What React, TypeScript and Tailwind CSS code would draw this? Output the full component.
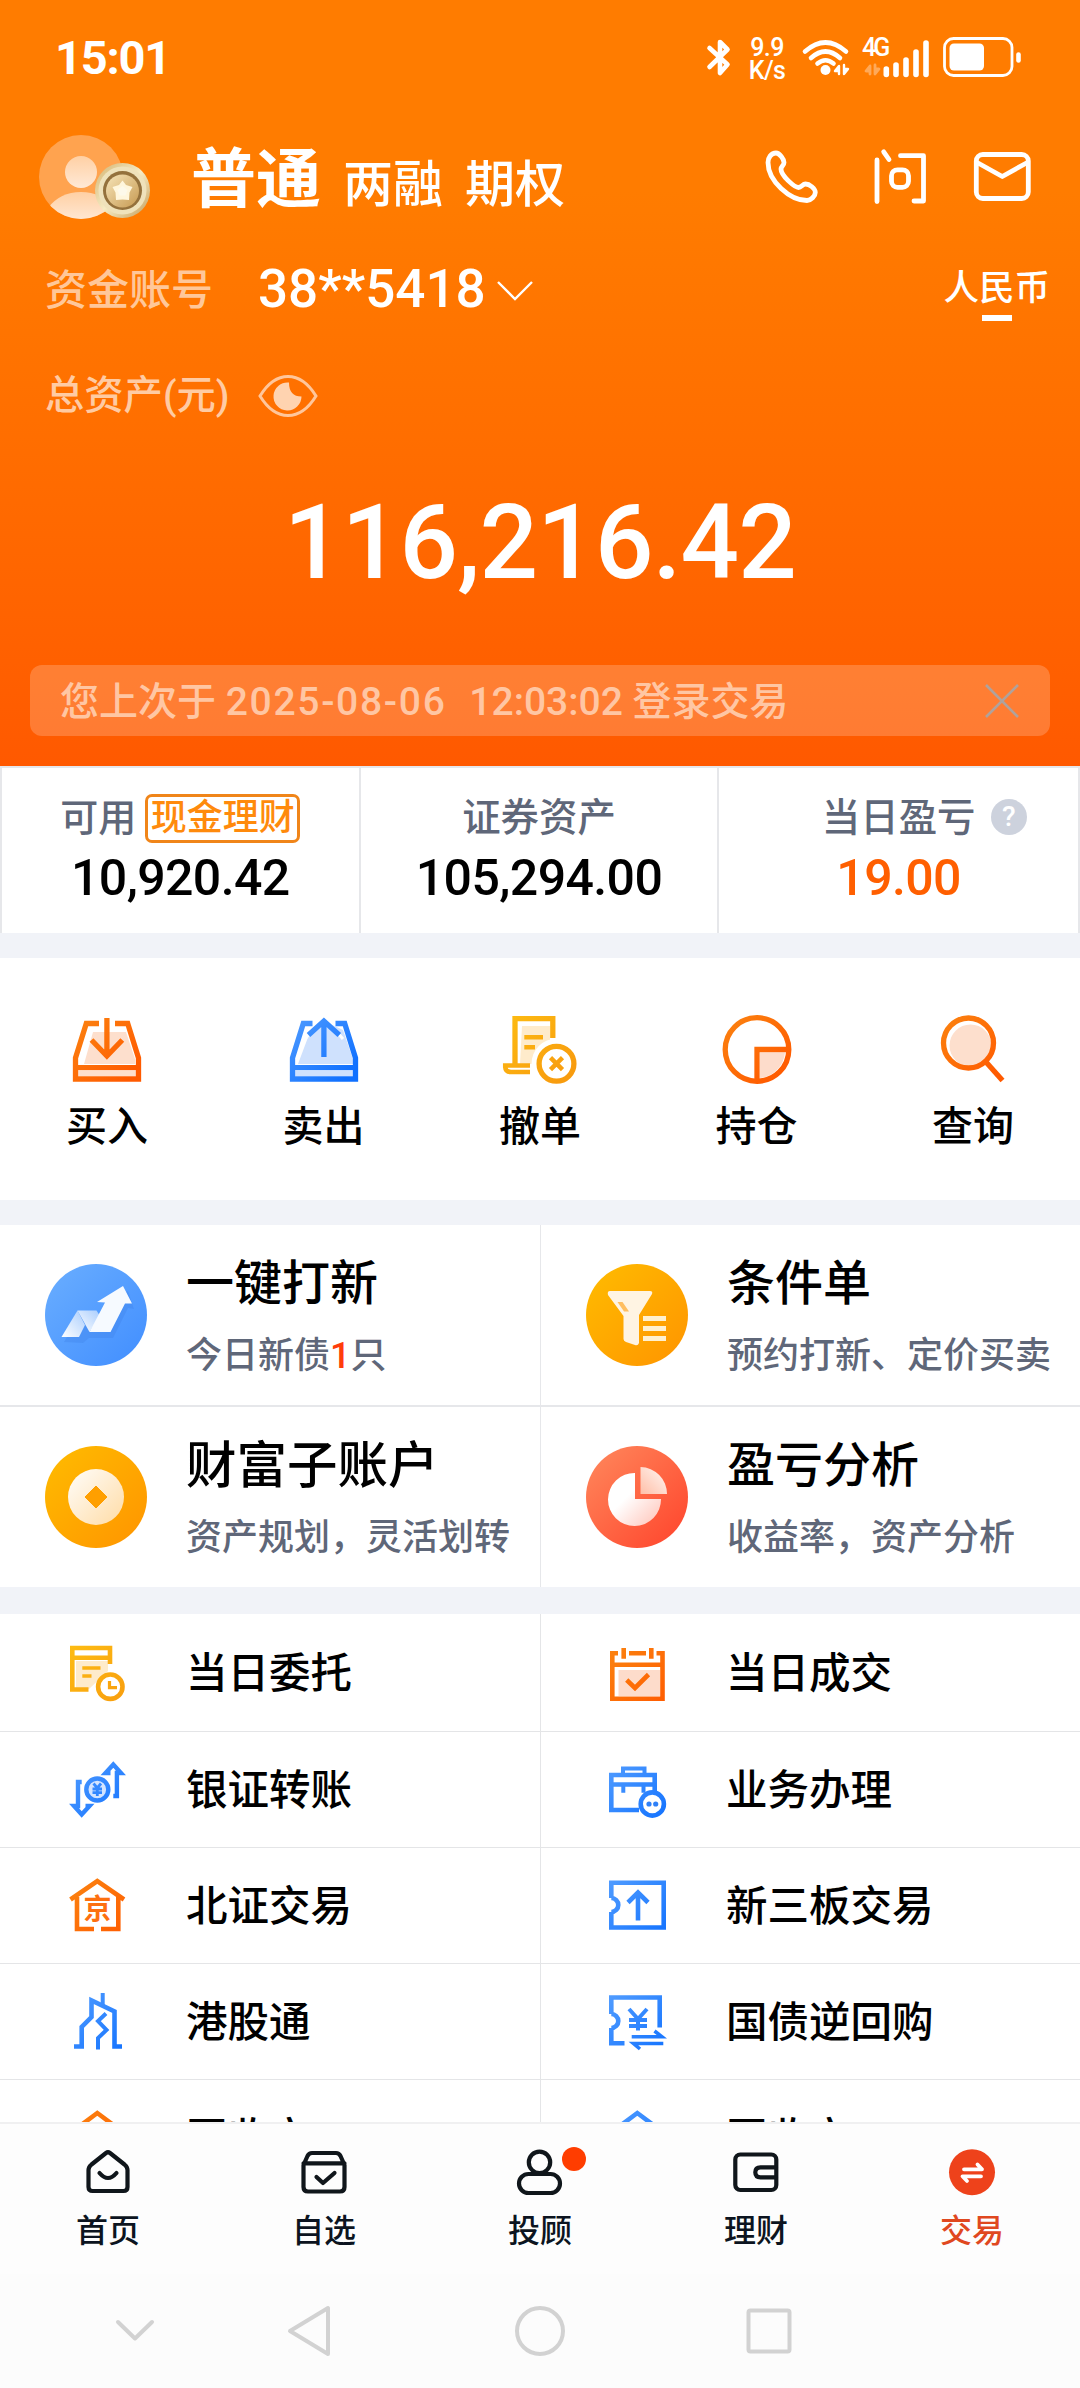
import { ReactNode } from "react";

const ORANGE = "url(#orange)"
const BLUE = "url(#blue)"
const YELLOW = "url(#yellow)"

// gradients shared by all the line icons
function IconGradients(){
    return(
        <svg className="absolute w-0 h-0" aria-hidden="true">
            <defs>
                <linearGradient id="orange" gradientUnits="userSpaceOnUse" x1="4" y1="4" x2="62" y2="62">
                    <stop offset="0" stopColor="#fb8310"/><stop offset="1" stopColor="#ff5a00"/>
                </linearGradient>
                <linearGradient id="blue" gradientUnits="userSpaceOnUse" x1="4" y1="4" x2="62" y2="62">
                    <stop offset="0" stopColor="#4f9bff"/><stop offset="1" stopColor="#0f70ff"/>
                </linearGradient>
                <linearGradient id="yellow" gradientUnits="userSpaceOnUse" x1="4" y1="4" x2="62" y2="62">
                    <stop offset="0" stopColor="#fdbb12"/><stop offset="1" stopColor="#f89c0e"/>
                </linearGradient>
                <linearGradient id="discBlue" x1="0" y1="0" x2="1" y2="1">
                    <stop offset="0.1" stopColor="#66abff"/><stop offset="0.9" stopColor="#4591ff"/>
                </linearGradient>
                <linearGradient id="discYellow" x1="0" y1="0" x2="1" y2="1">
                    <stop offset="0.1" stopColor="#ffb800"/><stop offset="0.9" stopColor="#ff9800"/>
                </linearGradient>
                <linearGradient id="discRed" x1="0" y1="0" x2="1" y2="1">
                    <stop offset="0.1" stopColor="#ff8258"/><stop offset="0.9" stopColor="#ff4a30"/>
                </linearGradient>
                <linearGradient id="cream" x1="0" y1="0" x2="1" y2="1">
                    <stop offset="0.1" stopColor="#fffaf2"/><stop offset="0.9" stopColor="#ffdfae"/>
                </linearGradient>
                <linearGradient id="pink" x1="0" y1="0" x2="1" y2="1">
                    <stop offset="0.4" stopColor="#ffffff"/><stop offset="1" stopColor="#ffc2b6"/>
                </linearGradient>
                <linearGradient id="pinkSmall" x1="1" y1="0" x2="0" y2="1">
                    <stop offset="0.1" stopColor="#fff3ee"/><stop offset="1" stopColor="#ffbfa8"/>
                </linearGradient>
                <linearGradient id="ribbon" x1="0" y1="1" x2="1" y2="0">
                    <stop offset="0" stopColor="#ffffff"/><stop offset="1" stopColor="#a9cdfd"/>
                </linearGradient>
                <linearGradient id="person" x1="0" y1="0" x2="0" y2="1">
                    <stop offset="0" stopColor="#ffd0a4"/><stop offset="1" stopColor="#ffe9d6"/>
                </linearGradient>
                <linearGradient id="medal" x1="0" y1="0" x2="1" y2="1">
                    <stop offset="0" stopColor="#d3b26e"/><stop offset="0.5" stopColor="#f6ebc4"/><stop offset="1" stopColor="#c39c58"/>
                </linearGradient>
                <linearGradient id="medalCore" x1="0" y1="0" x2="1" y2="1">
                    <stop offset="0" stopColor="#f6e4b8"/><stop offset="1" stopColor="#c79a52"/>
                </linearGradient>
            </defs>
        </svg>
    );
}

function StatusIcons(){
    return(
        <svg width="330" height="60" viewBox="700 28 330 60" fill="none" stroke="#fff" strokeLinecap="round" strokeLinejoin="round">
            <path d="M709.5 48 L727.5 64.5 L720 73 V42 L727.5 49.5 L709.5 67" strokeWidth="4.6"/>
            <g strokeWidth="4.6">
                <path d="M805 51.5 Q825.5 33.5 846 51.5"/>
                <path d="M811 58 Q825.5 45 840 58"/>
                <path d="M817.5 63.5 Q825.5 57 833.5 63.5"/>
            </g>
            <circle cx="825.5" cy="70" r="5" fill="#fff" stroke="none"/>
            <path d="M839 74 V66 L835 71 H839 M844 65 V74 L848 69 H844" strokeWidth="2.4"/>
            <path d="M870 74 V66 L866 71 H870 M875 65 V74 L879 69 H875" strokeWidth="2.8" opacity="0.35"/>
            <g strokeWidth="5.6">
                <path d="M886.3 69 V74.5"/>
                <path d="M896 65 V74.5"/>
                <path d="M906 60 V74.5"/>
                <path d="M916 52 V74.5"/>
                <path d="M926 43 V74.5"/>
            </g>
            <rect x="944.5" y="38.5" width="67.5" height="37" rx="9" strokeWidth="2.8"/>
            <rect x="949.5" y="43.5" width="34.5" height="27" rx="4.5" fill="#fff" stroke="none"/>
            <path d="M1018.5 54.5 V60.5" strokeWidth="4.6"/>
        </svg>
    );
}

function Avatar(){
    return(
        <svg width="116" height="88" viewBox="37 133 116 88">
            <clipPath id="face"><circle cx="81" cy="177" r="42"/></clipPath>
            <circle cx="81" cy="177" r="42" fill="#ffa34f"/>
            <g clipPath="url(#face)" fill="url(#person)">
                <circle cx="81" cy="172" r="16"/>
                <path d="M48 208 Q60 192 81 192 Q102 192 114 208 V222 H48 Z"/>
            </g>
            <circle cx="122.5" cy="190.5" r="27.5" fill="url(#medal)"/>
            <circle cx="122.5" cy="190.5" r="24" fill="#efe2bb"/>
            <circle cx="122.5" cy="190.5" r="19.5" fill="#94713c"/>
            <circle cx="122.5" cy="191" r="16.5" fill="url(#medalCore)"/>
            <path d="M122.5 180.5 L126 185 L132.5 187 L129.5 192.5 L129 200 L122.5 199.5 L116 200 L115.5 192.5 L112.5 187 L119 185 Z" fill="#fff6dc"/>
            <path d="M122.5 186 L127.5 190 L125.5 195.5 H119.5 L117.5 190 Z" fill="#fdf9ea"/>
        </svg>
    );
}

function HeaderActions(){
    return(
        <svg width="272" height="60" viewBox="762 147 272 60" fill="none" stroke="#fff" strokeWidth="4.8" strokeLinecap="round" strokeLinejoin="round">
            <path d="M776 153 C771 153 768 158 768 162.5 C768 181 790 200.5 807 200.5 C811 200.5 815.3 196 815.3 192.5 C815.3 188.5 809.5 184 805.5 184 C802.500 184 801.500 187.500 798.500 187.500 C795 187.500 781 176 781 169 C781 166.500 784 165.500 784 162.500 C784 159 779.500 153 776 153 Z"/>
            <path d="M877 160 V201.500 M883.700 151.800 L889 159.500"/>
            <path d="M900.500 155.700 H923.500 V201 H914"/>
            <rect x="891.500" y="169.800" width="17" height="17.500" rx="6"/>
            <rect x="976.300" y="154.500" width="52" height="44" rx="6.500"/>
            <path d="M978 163 L1002.300 176.500 L1026.500 163"/>
        </svg>
    );
}

const quickActions: { label: string, icon: ReactNode }[] = [
    { label: "买入", icon: <g>
        <path d="M24 18 H57 L66 45 V50 H15 Z" fill="#fddfcd"/>
        <path d="M9 57 H67 V62 H9 Z" fill="#fddfcd"/>
        <g stroke={ORANGE}>
            <path d="M30 9.5 H17.3 L6.5 44 V65 H69.5 V44 L58.7 9.5 H46 M6.5 53.7 H69.5"/>
            <path d="M37.9 4 V43 M22.5 26 L37.9 42 L53.3 26"/>
        </g>
    </g> },
    { label: "卖出", icon: <g>
        <path d="M24 18 L38 7 L57 16 L67 45 V50 H12 Z" fill="#cfe1fd"/>
        <path d="M9 57 H67 V62 H9 Z" fill="#cfe1fd"/>
        <path d="M19 25 L37.9 3 L57 25" stroke="#fff" strokeWidth="3"/>
        <g stroke={BLUE}>
            <path d="M26.5 9.5 H17.3 L6.5 44 V65 H69.5 V44 L58.7 9.5 H49.5 M6.5 53.7 H69.5"/>
            <path d="M37.9 43 V8 M22.5 21 L37.9 7 L53.3 21"/>
        </g>
    </g> },
    { label: "撤单", icon: <g>
        <path d="M20 12 H48 V34 L34 50 H18 Z" fill="#feebcb"/>
        <g stroke={YELLOW}>
            <path d="M13 51 V4.7 H50.8 V24"/>
            <path d="M3.2 49.3 V53 Q3.5 58 9 58 H28 M3.2 51.500 H28" strokeWidth="4.5"/>
            <path d="M22.3 23.3 H41 M22.3 33.3 H33" strokeWidth="4.5"/>
        </g>
        <circle cx="54.5" cy="49.7" r="25" fill="#fff"/>
        <g stroke={YELLOW}>
            <circle cx="54.5" cy="49.7" r="17.4"/>
            <path d="M48.5 43.7 L60.5 55.7 M60.5 43.7 L48.5 55.7" strokeWidth="4.5"/>
        </g>
    </g> },
    { label: "持仓", icon: <g>
        <path d="M41 38.5 H66 A28 28 0 0 1 41 64 Z" fill="#fddccb"/>
        <g stroke={ORANGE}>
            <circle cx="38" cy="35.5" r="31.8"/>
            <path d="M38 67 V35.5 H70"/>
        </g>
    </g> },
    { label: "查询", icon: <g>
        <circle cx="35.5" cy="31.5" r="21" fill="#fddfcd"/>
        <g stroke={ORANGE}>
            <circle cx="33.5" cy="29" r="25"/>
            <path d="M51 48 L67.5 66.5"/>
        </g>
    </g> },
]

const features: { title: string, titleClass: string, sub: ReactNode, icon: ReactNode }[] = [
    { title: "一键打新", titleClass: "text-[48px]", sub: <>今日新债<span className="text-[#ff3d0a]">1</span>只</>, icon: <g>
        <circle cx="51" cy="51" r="51" fill="url(#discBlue)"/>
        <path d="M18 75 L34 48 H52 L57 52 L54 63 L64 42 L56 40 L82 24 L88 42 L82 41 L67 71 H43 L37 76 Z" fill="#3a7fe6" opacity="0.3" transform="translate(1 3)"/>
        <path d="M16.5 73 L32.5 46.5 L40 61 L34 73 Z" fill="url(#ribbon)"/>
        <path d="M32.5 46.5 H51.5 L55 52 L44.5 68 Z" fill="url(#ribbon)"/>
        <path d="M44.5 68 L60 38.5 L52 38 L78 22 L87 39.5 H80 L65.5 68 Z" fill="#f6faff"/>
    </g> },
    { title: "条件单", titleClass: "text-[48px]", sub: "预约打新、定价买卖", icon: <g>
        <circle cx="51" cy="51" r="51" fill="url(#discYellow)"/>
        <path d="M24 27 H64 Q67 27 66 30 L53 51 V79 Q52 82 49 81 L40 78 Q37.5 77 37.5 75 V52 L22 31 Q21 27 24 27 Z" fill="#fff4e3"/>
        <path d="M31.5 38 H36.5 L43 47.5 H38 Z" fill="#ffbe60"/>
        <path d="M57 52 H80 V57 H57 Z M57 62 H80 V67 H57 Z M57 72 H80 V77 H57 Z" fill="#fff0cf"/>
    </g> },
    { title: "财富子账户", titleClass: "text-[50.5px]", sub: "资产规划，灵活划转", icon: <g>
        <circle cx="51" cy="51" r="51" fill="url(#discYellow)"/>
        <circle cx="51" cy="51" r="28" fill="url(#cream)"/>
        <path d="M51 40 L62 51 L51 62 L40 51 Z" fill="#ff9f00" stroke="#ff9f00" strokeWidth="1" strokeLinejoin="round"/>
    </g> },
    { title: "盈亏分析", titleClass: "text-[48px]", sub: "收益率，资产分析", icon: <g>
        <circle cx="51" cy="51" r="51" fill="url(#discRed)"/>
        <path d="M49 27 V53 H75 A26.5 26.5 0 1 1 49 27 Z" fill="url(#pink)"/>
        <path d="M54.5 21 A27 27 0 0 1 81 48 H54.5 Z" fill="url(#pinkSmall)"/>
    </g> },
]

const menu: { label: string, icon: ReactNode }[] = [
    { label: "当日委托", icon: <g>
        <path d="M9 18 H41 V28 L22 46 H9 Z" fill="#feebcb"/>
        <g stroke={YELLOW}>
            <path d="M21.5 46.5 H5.3 V5 H43 V21 M5.3 14.7 H43"/>
            <path d="M15.3 25 H33.5 M15.3 33 H24.5" strokeWidth="3.6"/>
            <circle cx="43.3" cy="43.7" r="12.2"/>
            <path d="M42.5 38 V44.7 H50" strokeWidth="3.2"/>
        </g>
    </g> },
    { label: "当日成交", icon: <g>
        <path d="M11.5 27 H53 V53 H11.5 Z" fill="#fddccb"/>
        <g stroke={ORANGE}>
            <path d="M11 10.3 H5.3 V55.7 H55.5 V10.3 H49.5 M5.3 21.7 H55.5 M22 10.3 H39"/>
            <path d="M16.7 5 V15.7 M44.3 5 V15.7 M19.7 37 L28 45 L41.5 31.5"/>
        </g>
    </g> },
    { label: "银证转账", icon: <g>
        <circle cx="30.3" cy="29.5" r="10.5" fill="#d3e4ff"/>
        <g stroke={BLUE} strokeWidth="4.4">
            <circle cx="30.3" cy="29.5" r="11"/>
            <path d="M46.3 36 H49.9 V13 H54 L46.3 4.5 L38.5 13 H43.5"/>
            <path d="M14.7 22 H11 V46 H7 L14.7 54.5 L22.5 46 H18.5"/>
            <path d="M26.5 23.5 L30.3 28 L34 23.5 M30.3 28 V36 M25.5 29 H35 M25.5 32.7 H35" strokeWidth="2.8"/>
        </g>
    </g> },
    { label: "业务办理", icon: <g>
        <g stroke={BLUE}>
            <path d="M32 50 H4.3 V15 H47.7 V32 M4.3 24.5 H47.7"/>
            <path d="M16 15 V8.5 H37.5 V15 M16.3 24 V32.7 M36.5 24 V32.7" strokeWidth="4"/>
            <circle cx="45.3" cy="44" r="11.6" fill="#fff"/>
        </g>
        <circle cx="42" cy="44" r="2.6" fill="#2f80f8"/>
        <circle cx="48.7" cy="44" r="2.6" fill="#2f80f8"/>
    </g> },
    { label: "北证交易", icon: <g>
        <g stroke={ORANGE}>
            <path d="M3.5 23.5 L30.3 5 L57 23.5 M10 21 V53 H27 M34 53 H51.3 V21"/>
        </g>
        <text x="30.5" y="43" textAnchor="middle" fontSize="28" fontWeight="700" fill="#fd7010">京</text>
    </g> },
    { label: "新三板交易", icon: <g stroke={BLUE}>
        <path d="M4.3 22 V6.7 H56.7 V51.5 H4.3 V36"/>
        <path d="M4.3 22 A7 7 0 0 1 4.3 36"/>
        <path d="M31 44.5 V17 M21 26.5 L31 16.5 L41 26.5"/>
    </g> },
    { label: "港股通", icon: <g stroke={BLUE}>
        <path d="M7 54.5 H14.7 V35 L24.5 25 V8.5 L47.5 19.5 V54.5 H55"/>
        <path d="M35.7 1 V13 M39 21.5 L31 29 L39.5 38 L31 46 V57.5" strokeWidth="4"/>
    </g> },
    { label: "国债逆回购", icon: <g stroke={BLUE}>
        <path d="M17.5 51.3 H4.3 V36 M4.3 22 V5.5 H52.7 V35.5"/>
        <path d="M4.3 22 A7 7 0 0 1 4.3 36"/>
        <path d="M22 17 L31 27 L40 17 M31 27 V38.5 M22 28 H40 M22 34 H40" strokeWidth="4"/>
        <path d="M24.7 44.8 H55 L47.5 39 M56.3 51.5 H26.5 L33 57" strokeWidth="3.6"/>
    </g> },
    { label: "固收宝", icon: <g stroke={ORANGE}>
        <path d="M3.5 25 L30.3 5 L57 25 M10 21 V53 H51.3 V21"/>
    </g> },
    { label: "固收宝", icon: <g stroke={BLUE}>
        <path d="M3.5 25 L30.3 5 L57 25 M10 21 V53 H51.3 V21"/>
    </g> },
]

const tabs: { label: string, active?: boolean, dot?: boolean, icon: ReactNode }[] = [
    { label: "首页", icon: <g>
        <path d="M22 5 Q24 3.5 26 5 L40.5 16.5 Q43.5 19 43.5 22 V39 Q43.5 43 39.5 43 H8.5 Q4.5 43 4.5 39 V22 Q4.5 19 7.5 16.5 Z"/>
        <path d="M15.5 25 Q24 35 32.5 25"/>
    </g> },
    { label: "自选", icon: <g>
        <path d="M3.5 17 V39 Q3.5 43.5 8 43.5 H40 Q44.5 43.5 44.5 39 V17 L40.5 8 Q39 5 36 5 H12 Q9 5 7.5 8 Z M3.5 15.3 H44.5"/>
        <path d="M16.5 29 L23 35 L34.5 25"/>
    </g> },
    { label: "投顾", dot: true, icon: <g>
        <circle cx="23.5" cy="14.3" r="10.7"/>
        <rect x="3" y="26" width="41" height="19" rx="9.5"/>
    </g> },
    { label: "理财", icon: <g>
        <rect x="3.3" y="6.5" width="41" height="35.5" rx="5"/>
        <path d="M44 19.3 H28.5 Q23.3 19.3 23.3 24.3 Q23.3 29.3 28.5 29.3 H44"/>
    </g> },
    { label: "交易", active: true, icon: <g>
        <circle cx="24" cy="24.3" r="23" fill="#ee421b" stroke="none"/>
        <path d="M16 21.3 H34 L29.5 16.5 M33 28.3 H14.5 L19 33" stroke="#fff" strokeWidth="3.8"/>
    </g> },
]

export default function App(){
    return(
        <div className="w-[1080px] h-[2388px] flex flex-col overflow-hidden bg-white font-medium text-black font-['Roboto','Noto_Sans_CJK_SC',sans-serif]">
            <IconGradients/>

            <header className="h-[766px] shrink-0 flex flex-col bg-linear-to-b from-[#ff7c00] from-25% to-[#ff5900] text-white">
                <div className="h-[115px] flex items-center justify-between pl-[55px] pr-[50px]">
                    <span className="text-[47px] font-bold leading-none tracking-[-1.2px]">15:01</span>
                    <div className="relative">
                        <StatusIcons/>
                        <div className="absolute left-[46px] top-[8px] w-[42px] flex flex-col items-center text-[25px] leading-[23px] tracking-tight">
                            <span>9.9</span>
                            <span>K/s</span>
                        </div>
                        <div className="absolute left-[162px] top-[8px] text-[25px] leading-[23px] tracking-[-3px]">4G</div>
                    </div>
                </div>

                <div className="h-[124px] flex items-center pl-[37px] pr-[46px]">
                    <Avatar/>
                    <div className="flex items-baseline ml-[38px] pt-[7px] leading-none">
                        <span className="text-[65px] font-bold">普通</span>
                        <span className="text-[50px] ml-[22px]">两融</span>
                        <span className="text-[50px] ml-[22px]">期权</span>
                    </div>
                    <div className="ml-auto"><HeaderActions/></div>
                </div>

                <div className="h-[100px] flex items-center pl-[45px] pr-[30px]">
                    <span className="w-[213px] pt-[4px] text-[42px] leading-none text-[#ffc799]">资金账号</span>
                    <span className="text-[53px] leading-none">38**5418</span>
                    <svg className="ml-[10px] mt-[3px]" width="38" height="24" viewBox="0 0 38 24" fill="none" stroke="#fff" strokeWidth="2.4"><path d="M2 3 L19 20 L36 3"/></svg>
                    <div className="ml-auto flex flex-col items-center pt-[11px]">
                        <span className="text-[35.5px] leading-[40px]">人民币</span>
                        <span className="w-[30px] h-[6px] mt-[7px] bg-white"></span>
                    </div>
                </div>

                <div className="h-[114px] flex items-center pl-[45px] text-[#ffcba3]">
                    <span className="pt-[2px] text-[39.3px] leading-none">总资产(元)</span>
                    <svg className="ml-[28px]" width="60" height="44" viewBox="0 0 60 44">
                        <path d="M2 22 Q14 2.5 30 2.5 Q46 2.5 58 22 Q46 41.5 30 41.5 Q14 41.5 2 22 Z" fill="none" stroke="#ffc69b" strokeWidth="3"/>
                        <path d="M31 8.5 A14 14 0 1 0 43.5 22.5 Q31 22.5 31 8.5 Z" fill="#ffd3b0"/>
                    </svg>
                </div>

                <div className="h-[174px] flex items-center justify-center pt-[4px] text-[103px] leading-none tracking-[-0.8px]">116,216.42</div>

                <div className="mx-[30px] mt-[38px] h-[71px] px-[30px] flex items-center justify-between rounded-[12px] bg-white/20 text-[#ffc6a3] text-[39px]">
                    <span className="leading-none whitespace-pre pt-[3px]">您上次于 <span className="tracking-[1.7px]">2025-08-06  </span>12:03:02 登录交易</span>
                    <svg width="36" height="36" viewBox="0 0 36 36" stroke="#b0a29c" strokeWidth="2.6"><path d="M2 2 L34 34 M34 2 L2 34"/></svg>
                </div>
            </header>

            <section className="h-[167px] shrink-0 grid grid-cols-3 border-t-2 border-x-2 border-[#e6e7ea] text-[#5f6779]">
                <div className="flex flex-col items-center border-r-2 border-[#e6e7ea] pt-[24px]">
                    <div className="h-[52px] flex items-center text-[38px] leading-none">
                        可用
                        <span className="ml-[9px] h-[49px] w-[155px] flex items-center justify-center rounded-[7px] border-3 border-[#f08519] text-[#ff8a0c] text-[36px]">现金理财</span>
                    </div>
                    <span className="mt-[9px] text-[50px] leading-none tracking-[-0.6px] text-black">10,920.42</span>
                </div>
                <div className="flex flex-col items-center border-r-2 border-[#e6e7ea] pt-[24px]">
                    <div className="h-[52px] flex items-center text-[38.4px] leading-none">证券资产</div>
                    <span className="mt-[9px] text-[50px] leading-none tracking-[-0.6px] text-black">105,294.00</span>
                </div>
                <div className="flex flex-col items-center pt-[24px]">
                    <div className="relative h-[52px] flex items-center text-[38.4px] leading-none">
                        当日盈亏
                        <span className="absolute left-[169px] top-[7px] w-[36px] h-[36px] rounded-full bg-[#cdd2dd] text-white text-[28px] flex items-center justify-center">?</span>
                    </div>
                    <span className="mt-[9px] text-[50px] leading-none tracking-[-0.6px] text-[#ff5f00]">19.00</span>
                </div>
            </section>

            <section className="h-[292px] shrink-0 flex justify-center border-y-[25px] border-[#f1f3f8] pt-[56px]">
                {quickActions.map((action) => (
                    <div key={action.label} className="w-[216.5px] shrink-0 flex flex-col items-center">
                        <svg width="76" height="72" viewBox="0 0 76 72" fill="none" strokeWidth="5.3">{action.icon}</svg>
                        <span className="mt-[21px] text-[41px] leading-none">{action.label}</span>
                    </div>
                ))}
            </section>

            <section className="h-[389px] shrink-0 grid grid-cols-2 grid-rows-2 gap-y-[2px] bg-[#e6e7ea] border-b-[27px] border-[#f1f3f8]">
                {features.map((feature, index) => (
                    <div key={feature.title} className={`bg-white flex items-start pl-[45px] ${index % 2 ? "border-l border-[#e6e7ea]" : ""}`}>
                        <svg className="mt-[39px] shrink-0" width="102" height="102" viewBox="0 0 102 102">{feature.icon}</svg>
                        <div className="ml-[39px] mt-[32px] whitespace-nowrap">
                            <h2 className={`h-[54px] leading-[54px] ${feature.titleClass}`}>{feature.title}</h2>
                            <p className="mt-[24px] text-[36px] leading-[42px] text-[#5f6779]">{feature.sub}</p>
                        </div>
                    </div>
                ))}
            </section>

            <section className="h-[508px] shrink-0 overflow-hidden grid grid-cols-2 grid-rows-[118px] auto-rows-[116px]">
                {menu.map((item, index) => (
                    <div key={index} className={`flex items-center border-b border-[#e4e5e7] ${index % 2 ? "border-l pl-[66px]" : "pl-[67px]"}`}>
                        <svg width="60" height="60" viewBox="0 0 60 60" fill="none" strokeWidth="4.6">{item.icon}</svg>
                        <span className="ml-[59px] mt-[3px] text-[41.5px] leading-none">{item.label}</span>
                    </div>
                ))}
            </section>

            <nav className="h-[152px] shrink-0 grid grid-cols-5 border-t-2 border-[#f0f0f1] bg-[#fdfdfd] text-[#0c1420]">
                {tabs.map((tab) => (
                    <div key={tab.label} className={`flex flex-col items-center pt-[24px] ${tab.active ? "text-[#e0481f]" : ""}`}>
                        <div className="relative">
                            <svg width="48" height="48" viewBox="0 0 48 48" fill="none" stroke="#10161b" strokeWidth="4.2" strokeLinecap="round" strokeLinejoin="round">{tab.icon}</svg>
                            {tab.dot && <span className="absolute left-[46px] top-[-1px] w-[24px] h-[24px] rounded-full bg-[#ff3d00]"></span>}
                        </div>
                        <span className="mt-[19px] text-[32px] leading-none">{tab.label}</span>
                    </div>
                ))}
            </nav>

            <footer className="h-[114px] shrink-0 bg-[#fcfcfc]">
                <svg width="1080" height="114" viewBox="0 2274 1080 114" fill="none" stroke="#d2d2d2" strokeWidth="4" strokeLinecap="round" strokeLinejoin="round">
                    <path d="M118 2322 L135 2338.5 L152 2322"/>
                    <path d="M328 2308 V2354 L290 2331 Z"/>
                    <circle cx="540" cy="2331" r="23"/>
                    <rect x="748.5" y="2310.5" width="41" height="41" rx="2"/>
                </svg>
            </footer>
        </div>
    );
}
